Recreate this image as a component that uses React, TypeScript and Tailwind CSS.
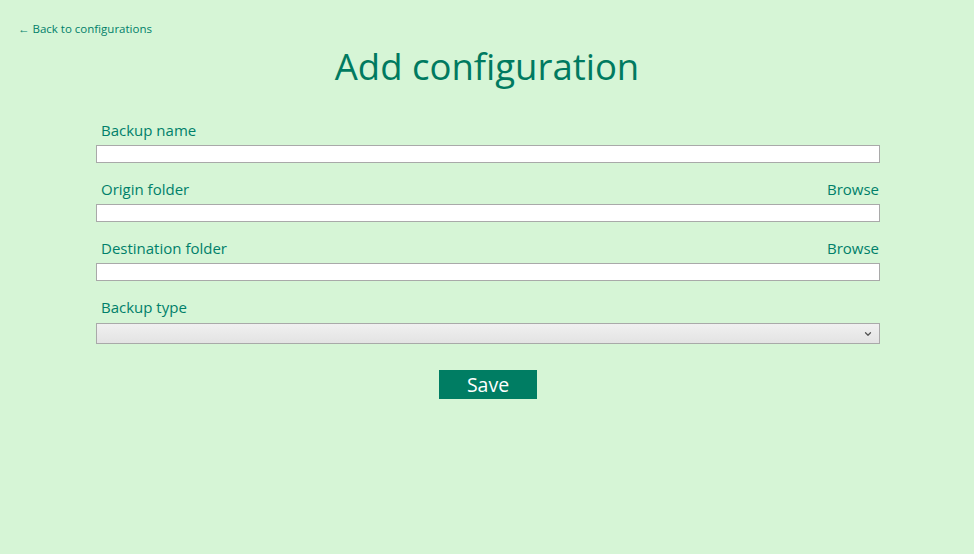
import { ChevronDown } from "lucide-react";

const font = { fontFamily: '"Open Sans", "Noto Sans", sans-serif' };

function Field({ label, browse }: { label: string; browse?: boolean }) {
  return (
    <div className="flex flex-col">
      <div className="flex items-end justify-between pl-[5px] pr-[1px] h-[29px] pb-[6px]">
        <span className="text-[15px] leading-[18px]">{label}</span>
        {browse && <span className="text-[15px] leading-[18px]">Browse</span>}
      </div>
      <input className="h-[18px] bg-white border border-[#a9a9a9] outline-none" />
    </div>
  );
}

export default function App() {
  return (
    <div className="min-h-[554px] w-full bg-[#d6f5d6] text-[#00806a]" style={font}>
      <div className="pl-[18px] pt-[15px] h-[38px]">
        <a className="text-[11.5px] leading-[16px] cursor-pointer">← Back to configurations</a>
      </div>
      <h1 className="text-center text-[36.5px] leading-[52px] text-[#007a60] mt-[2px]">Add configuration</h1>
      <div className="ml-[96px] mr-[94px] mt-[24px] flex flex-col gap-[12px]">
        <Field label="Backup name" />
        <Field label="Origin folder" browse />
        <Field label="Destination folder" browse />
        <div className="flex flex-col">
          <div className="flex items-end pl-[5px] h-[30px] pb-[7px]">
            <span className="text-[15px] leading-[18px]">Backup type</span>
          </div>
          <div className="h-[21px] border border-[#a9a9a9] bg-gradient-to-b from-[#f0f0f0] to-[#e3e3e3] flex items-center justify-end pr-[6px]">
            <ChevronDown size={10} strokeWidth={3} className="text-[#555]" />
          </div>
        </div>
        <div className="flex justify-center mt-[14px]">
          <button className="w-[98px] h-[29px] bg-[#007d63] text-white text-[19.5px] leading-[29px]">Save</button>
        </div>
      </div>
    </div>
  );
}
